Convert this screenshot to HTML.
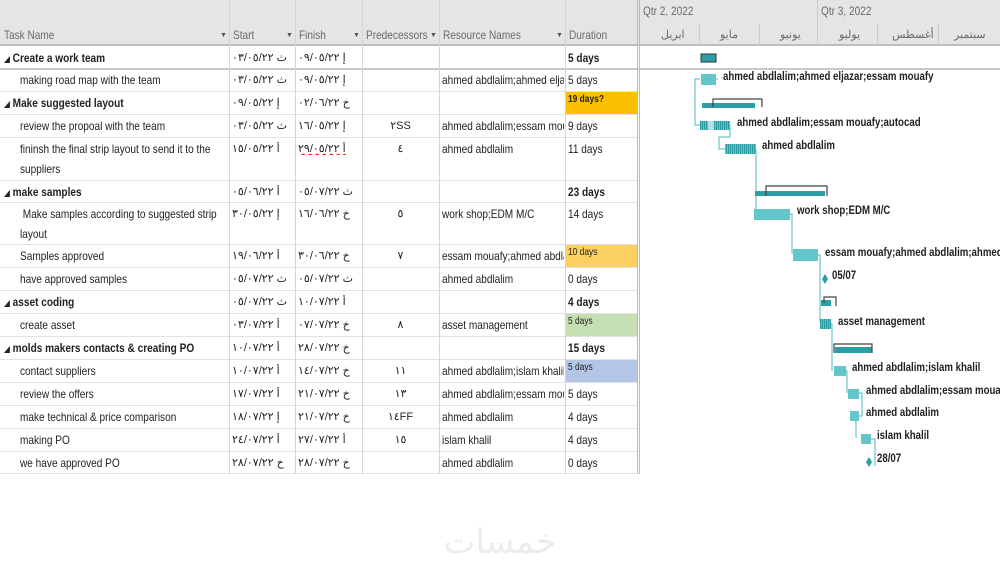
<!DOCTYPE html>
<html><head><meta charset="utf-8">
<style>
*{margin:0;padding:0;box-sizing:border-box}
html,body{overflow:hidden}
body{width:1000px;height:574px;background:#fff;position:relative;font-family:"Liberation Sans","Noto Sans CJK SC",sans-serif;font-size:12px;color:#222}
.n{display:inline-block;transform:scaleX(.84);transform-origin:0 0;white-space:nowrap}
.hdr{position:absolute;left:0;top:0;width:1000px;height:46px;background:#e5e5e5;border-bottom:2px solid #bdbdbd}
.hc{position:absolute;top:28px;color:#6a6a6a;font-size:12px;white-space:nowrap}
.arr{position:absolute;top:32px;font-size:7px;color:#555}
.vl{position:absolute;width:1px;background:#d4d4d4}
.row{position:absolute;left:0;width:637px;border-bottom:1px solid #e2e2e2}
.c{position:absolute;top:4px;white-space:nowrap;overflow:hidden}
.b{font-weight:bold}
.ar{font-family:"Liberation Sans","Noto Sans CJK SC",sans-serif;font-size:11px}
.g{position:absolute;font-weight:bold;font-size:11.5px;white-space:nowrap;transform:scaleX(.84);transform-origin:0 0}
</style></head><body>
<div class="hdr"></div>
<div class="hc" style="left:4px"><span class="n">Task Name</span></div><div class="arr" style="left:220px">▼</div>
<div class="hc" style="left:233px"><span class="n">Start</span></div><div class="arr" style="left:286px">▼</div>
<div class="hc" style="left:299px"><span class="n">Finish</span></div><div class="arr" style="left:353px">▼</div>
<div class="hc" style="left:366px"><span class="n">Predecessors</span></div><div class="arr" style="left:430px">▼</div>
<div class="hc" style="left:443px"><span class="n">Resource Names</span></div><div class="arr" style="left:556px">▼</div>
<div class="hc" style="left:569px"><span class="n">Duration</span></div>
<div class="hc" style="left:643px;top:4px"><span class="n">Qtr 2, 2022</span></div>
<div class="hc" style="left:821px;top:4px"><span class="n">Qtr 3, 2022</span></div>
<div class="hc ar" style="left:661px">ابريل</div>
<div class="hc ar" style="left:720px">مايو</div>
<div class="hc ar" style="left:780px">يونيو</div>
<div class="hc ar" style="left:839px">يوليو</div>
<div class="hc ar" style="left:892px">أغسطس</div>
<div class="hc ar" style="left:954px">سبتمبر</div>
<div class="vl" style="left:817px;top:0;height:46px;background:#ccc"></div>
<div class="vl" style="left:699px;top:24px;height:22px;background:#ccc"></div>
<div class="vl" style="left:759px;top:24px;height:22px;background:#ccc"></div>
<div class="vl" style="left:877px;top:24px;height:22px;background:#ccc"></div>
<div class="vl" style="left:938px;top:24px;height:22px;background:#ccc"></div>
<div class="vl" style="left:639px;top:0;height:474px;background:#bbb"></div>
<div class="vl" style="left:637px;top:0;height:474px;background:#bbb"></div>

<div id="rows"></div>
<div style="position:absolute;left:0;top:68px;width:1000px;height:2px;background:#c8c8c8"></div>
<div class="vl" style="left:229px;top:0;height:474px"></div>
<div class="vl" style="left:295px;top:0;height:474px"></div>
<div class="vl" style="left:362px;top:0;height:474px"></div>
<div class="vl" style="left:439px;top:0;height:474px"></div>
<div class="vl" style="left:565px;top:0;height:474px"></div>

<script>
var R=[
[47,22,1,"Create a work team","ث ٠٣/٠٥/٢٢","إ ٠٩/٠٥/٢٢","","","5 days",""],
[69,23,0,"making road map with the team","ث ٠٣/٠٥/٢٢","إ ٠٩/٠٥/٢٢","","ahmed abdlalim;ahmed eljaz","5 days",""],
[92,23,1,"Make suggested layout","إ ٠٩/٠٥/٢٢","خ ٠٢/٠٦/٢٢","","","19 days?","#fcc000"],
[115,23,0,"review the propoal with the team","ث ٠٣/٠٥/٢٢","إ ١٦/٠٥/٢٢","٢SS","ahmed abdlalim;essam mou","9 days",""],
[138,43,0,"fininsh the final strip layout to send it to the<br>suppliers","أ ١٥/٠٥/٢٢","أ ٢٩/٠٥/٢٢","٤","ahmed abdlalim","11 days",""],
[181,22,1,"make samples","أ ٠٥/٠٦/٢٢","ث ٠٥/٠٧/٢٢","","","23 days",""],
[203,42,0,"&nbsp;Make samples according to suggested strip<br>layout","إ ٣٠/٠٥/٢٢","خ ١٦/٠٦/٢٢","٥","work shop;EDM M/C","14 days",""],
[245,23,0,"Samples approved","أ ١٩/٠٦/٢٢","خ ٣٠/٠٦/٢٢","٧","essam mouafy;ahmed abdla","10 days","#fcd060"],
[268,23,0,"have approved samples","ث ٠٥/٠٧/٢٢","ث ٠٥/٠٧/٢٢","","ahmed abdlalim","0 days",""],
[291,23,1,"asset coding","ث ٠٥/٠٧/٢٢","أ ١٠/٠٧/٢٢","","","4 days",""],
[314,23,0,"create asset","أ ٠٣/٠٧/٢٢","خ ٠٧/٠٧/٢٢","٨","asset management","5 days","#c6dfb2"],
[337,23,1,"molds makers contacts &amp; creating PO","أ ١٠/٠٧/٢٢","خ ٢٨/٠٧/٢٢","","","15 days",""],
[360,23,0,"contact suppliers","أ ١٠/٠٧/٢٢","خ ١٤/٠٧/٢٢","١١","ahmed abdlalim;islam khalil","5 days","#b3c6e6"],
[383,23,0,"review the offers","أ ١٧/٠٧/٢٢","خ ٢١/٠٧/٢٢","١٣","ahmed abdlalim;essam mou","5 days",""],
[406,23,0,"make technical &amp; price comparison","إ ١٨/٠٧/٢٢","خ ٢١/٠٧/٢٢","١٤FF","ahmed abdlalim","4 days",""],
[429,23,0,"making PO","أ ٢٤/٠٧/٢٢","أ ٢٧/٠٧/٢٢","١٥","islam khalil","4 days",""],
[452,22,0,"we have approved PO","خ ٢٨/٠٧/٢٢","خ ٢٨/٠٧/٢٢","","ahmed abdlalim","0 days",""]];
var h="";
R.forEach(function(r){
 h+='<div class="row" style="top:'+r[0]+'px;height:'+r[1]+'px">';
 h+='<div class="c'+(r[2]?' b':'')+'" style="left:'+(r[2]?4:20)+'px;line-height:20px;top:1px;width:'+(r[2]?224:208)+'px"><span class="n">'+(r[2]?'<span style="font-size:7px">◢</span> ':'')+r[3]+'</span></div>';
 h+='<div class="c ar" style="left:232px;width:62px"><span dir="rtl" style="unicode-bidi:embed">'+r[4]+'</span></div>';
 h+='<div class="c ar" style="left:298px;width:62px"><span dir="rtl" style="unicode-bidi:embed'+(r[5].indexOf("٢٩")>=0?';text-decoration:underline wavy red':'')+'">'+r[5]+'</span></div>';
 h+='<div class="c ar" style="left:362px;width:77px;text-align:center">'+r[6]+'</div>';
 h+='<div class="c" style="left:442px;width:122px"><span class="n">'+r[7]+'</span></div>';
 if(r[9])h+='<div style="position:absolute;left:566px;top:0;width:71px;height:'+(r[1]-1)+'px;background:'+r[9]+'"></div>';
 h+='<div class="c'+(r[2]?' b':'')+'" style="left:568px;'+(r[9]?'font-size:10px;top:2px':'')+'"><span class="n">'+r[8]+'</span></div>';
 h+='</div>';
});
document.getElementById("rows").innerHTML=h;
</script>

<svg style="position:absolute;left:0;top:0" width="1000" height="574">
<defs><pattern id="hp" width="2" height="4" patternUnits="userSpaceOnUse"><rect width="2" height="4" fill="#5fc3c8"/><rect width="1" height="4" fill="#2a9aa0"/></pattern></defs>
<g stroke="#4bb8be" stroke-width="1" fill="none">
<path d="M700 79 H695 V125 H700"/>
<path d="M716 79 H718"/>
<path d="M730 125 V137 H719 V149 H725"/>
<path d="M756 149 H756 V212"/>
<path d="M790 214 H792 V254"/>
<path d="M818 255 H820 V322"/>
<path d="M831 324 H832 V371"/>
<path d="M846 371 H847 V393"/>
<path d="M859 393 H862 V416 H859"/>
<path d="M850 416 H856 V438"/>
<path d="M871 439 H875 V466"/>
</g>
<rect x="701" y="54" width="15" height="8" fill="#2a9fa5" stroke="#333" stroke-width="1"/>
<rect x="701" y="74" width="15" height="11" fill="#62c6cb"/>
<rect x="702" y="103" width="53" height="5" fill="#2a9fa5"/>
<path d="M713 107 V99 H762 V107" stroke="#444" fill="none" stroke-width="1.2"/>
<rect x="700" y="121" width="30" height="9" fill="url(#hp)"/>
<rect x="708" y="121" width="6" height="9" fill="#fff" opacity=".6"/>
<rect x="725" y="144" width="31" height="10" fill="url(#hp)"/>
<rect x="755" y="191" width="70" height="5" fill="#2a9fa5"/>
<path d="M766 196 V186 H827 V196" stroke="#444" fill="none" stroke-width="1.2"/>
<rect x="754" y="209" width="36" height="11" fill="#62c6cb"/>
<rect x="793" y="249" width="25" height="12" fill="#62c6cb"/>
<path d="M825 274 L828 279 L825 284 L822 279Z" fill="#2a9fa5"/>
<rect x="821" y="300" width="10" height="6" fill="#2a9fa5"/>
<path d="M824 303 V297 H836 V306" stroke="#444" fill="none" stroke-width="1.2"/>
<rect x="820" y="319" width="11" height="10" fill="url(#hp)"/>
<rect x="835" y="347" width="37" height="6" fill="#2a9fa5"/>
<path d="M834 353 V344 H872 V353" stroke="#444" fill="none" stroke-width="1.2"/>
<rect x="834" y="366" width="12" height="10" fill="#62c6cb"/>
<rect x="848" y="389" width="11" height="10" fill="#62c6cb"/>
<rect x="850" y="411" width="9" height="10" fill="#62c6cb"/>
<rect x="861" y="434" width="10" height="10" fill="#62c6cb"/>
<path d="M869 457 L872 462 L869 467 L866 462Z" fill="#2a9fa5"/>
</svg>
<div class="g" style="left:723px;top:71px">ahmed abdlalim;ahmed eljazar;essam mouafy</div>
<div class="g" style="left:737px;top:117px">ahmed abdlalim;essam mouafy;autocad</div>
<div class="g" style="left:762px;top:140px">ahmed abdlalim</div>
<div class="g" style="left:797px;top:205px">work shop;EDM M/C</div>
<div style="position:absolute;left:825px;top:247px;width:175px;overflow:hidden;height:16px"><div class="g" style="left:0;top:0">essam mouafy;ahmed abdlalim;ahmed elj</div></div>
<div class="g" style="left:832px;top:270px">05/07</div>
<div class="g" style="left:838px;top:316px">asset management</div>
<div class="g" style="left:852px;top:362px">ahmed abdlalim;islam khalil</div>
<div class="g" style="left:866px;top:385px">ahmed abdlalim;essam mouafy</div>
<div class="g" style="left:866px;top:407px">ahmed abdlalim</div>
<div class="g" style="left:877px;top:430px">islam khalil</div>
<div class="g" style="left:877px;top:453px">28/07</div>
<div style="position:absolute;left:430px;top:522px;width:140px;text-align:center;font-family:'Liberation Sans','Noto Sans CJK SC',sans-serif;font-size:34px;color:#ececec">خمسات</div>
</body></html>
